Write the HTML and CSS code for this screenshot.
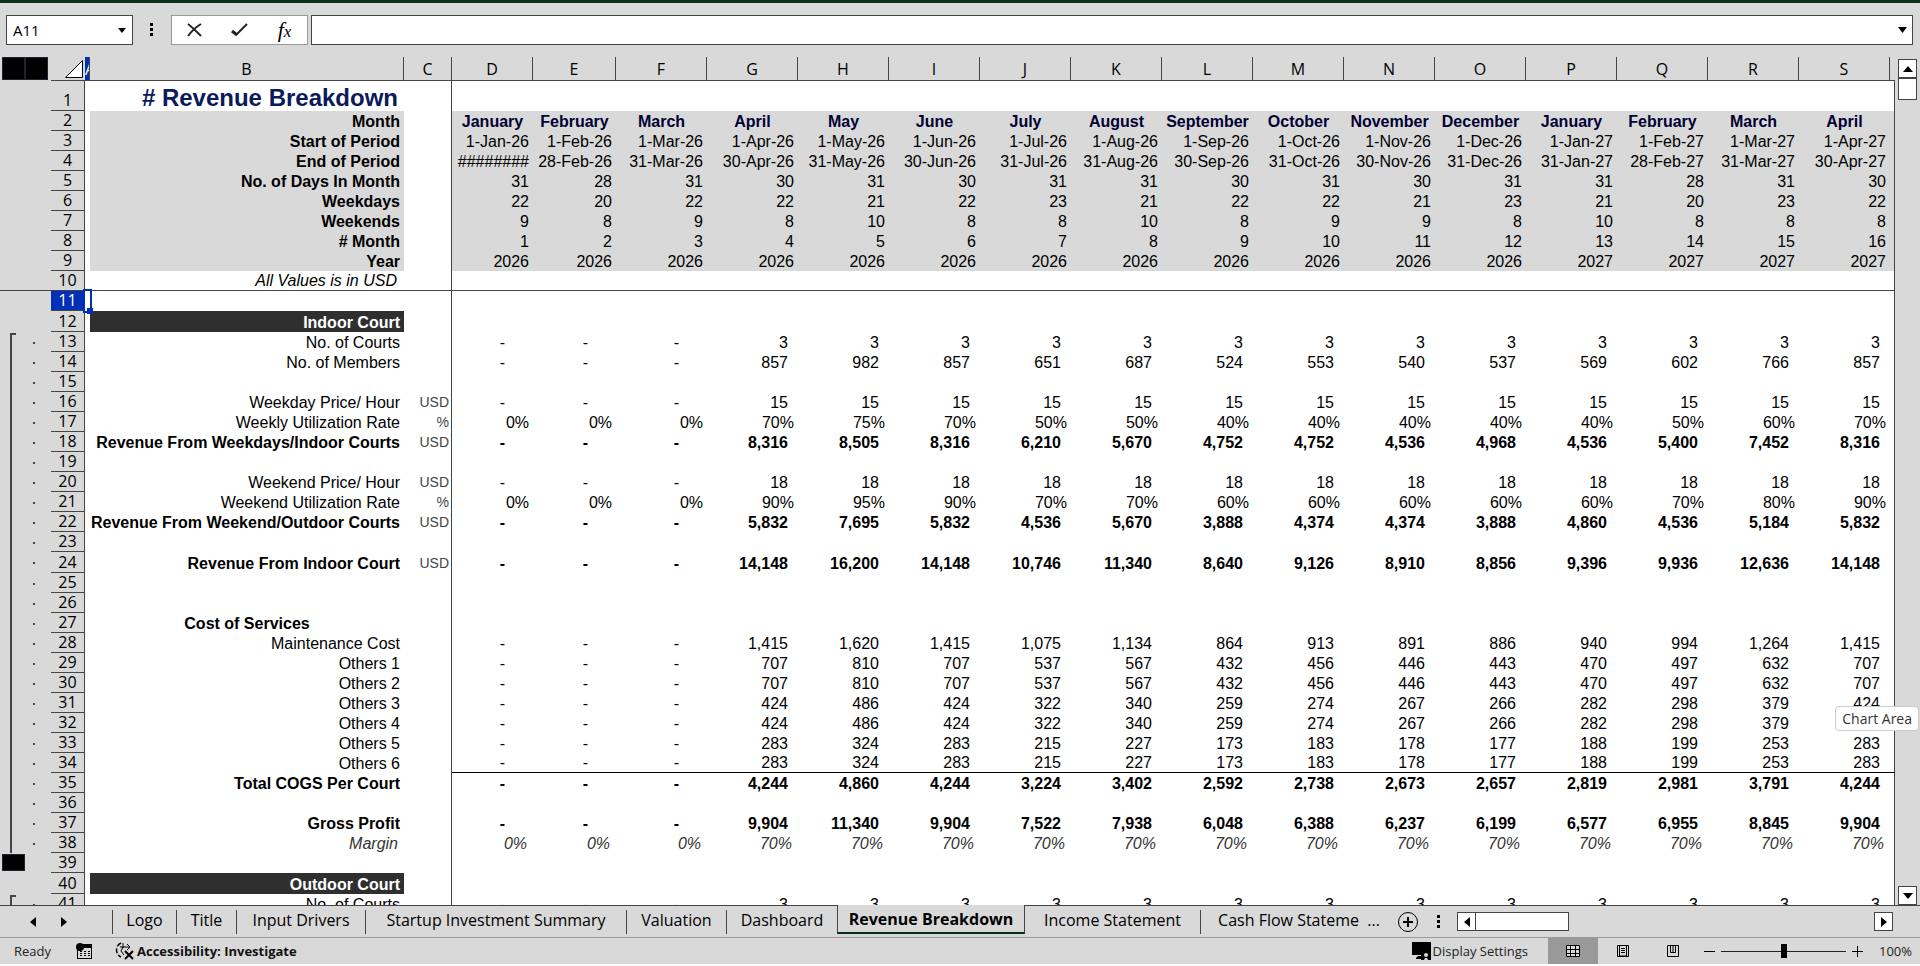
FILE: index.html
```
<!DOCTYPE html>
<html lang="en">
<head>
	<meta charset="UTF-8">
	<meta name="viewport" content="width=device-width">
	<title>Revenue Breakdown</title>
	<link rel="stylesheet" href="styles.css">
</head>
<body>
	<header class="formula-bar">
		<div class="name-box">
			<input class="name-input" type="text" value="A11" aria-label="Name box">
			<button class="plain" aria-label="Open name list"><svg width="8" height="5"><path d="M0 0h8L4 5z"/></svg></button>
		</div>
		<svg class="grip" width="4" height="14"><path d="M0 0h3v3H0zM0 5h3v3H0zM0 10h3v3H0z"/></svg>
		<div class="fx-box">
			<button class="plain" aria-label="Cancel"><svg width="18" height="16" fill="none" stroke="#222" stroke-width="2"><path d="M2 2c4 3 9 8 13 12M15 2C10 5 5 10 2 14"/></svg></button>
			<button class="plain" aria-label="Enter"><svg width="18" height="16" fill="none" stroke="#222"><path stroke-width="3" d="M1 9l5 4"/><path stroke-width="2" d="M5 13L16 2"/></svg></button>
			<button class="plain fx" aria-label="Insert function"><i>f</i><i class="x">x</i></button>
		</div>
		<div class="formula">
			<input class="formula-input" type="text" aria-label="Formula">
			<button class="plain" aria-label="Expand formula bar"><svg width="9" height="6"><path d="M0 0h9L4.500 6z"/></svg></button>
		</div>
	</header>

	<main class="workspace">
		<div class="sheet">
			<table class="grid">
				<colgroup id="cols"></colgroup>
				<thead id="head"></thead>
				<tbody id="body"></tbody>
			</table>
		</div>
		<div class="vscroll">
			<button class="arrow" aria-label="Scroll up"><svg width="10" height="6"><path d="M0 6h10L5 0z"/></svg></button>
			<div class="vthumb"></div>
			<button class="arrow last" aria-label="Scroll down"><svg width="10" height="6"><path d="M0 0h10L5 6z"/></svg></button>
		</div>
		<div class="tip">Chart Area</div>
	</main>

	<nav class="tabs">
		<div class="tab-nav">
			<button class="plain" aria-label="Previous sheet"><svg width="6" height="10"><path d="M6 0v10L0 5z"/></svg></button>
			<button class="plain" aria-label="Next sheet"><svg width="6" height="10"><path d="M0 0v10L6 5z"/></svg></button>
		</div>
		<button class="tab w-logo">Logo</button>
		<button class="tab w-title">Title</button>
		<button class="tab w-input">Input Drivers</button>
		<button class="tab w-startup">Startup Investment Summary</button>
		<button class="tab w-valuation">Valuation</button>
		<button class="tab w-dashboard">Dashboard</button>
		<button class="tab w-revenue active">Revenue Breakdown</button>
		<button class="tab w-income">Income Statement</button>
		<button class="tab w-cash">Cash Flow Stateme&nbsp; ...</button>
		<button class="plain" aria-label="New sheet"><svg width="22" height="22" fill="none" stroke="#000"><circle cx="11" cy="11" r="9.500"/><path stroke-width="2" d="M6 11h10M11 6v10"/></svg></button>
		<svg class="grip" width="4" height="14"><path d="M0 0h3v3H0zM0 5h3v3H0zM0 10h3v3H0z"/></svg>
		<div class="hscroll">
			<button class="arrow" aria-label="Scroll left"><svg width="6" height="10"><path d="M6 0v10L0 5z"/></svg></button>
			<div class="hthumb"></div>
			<button class="arrow last" aria-label="Scroll right"><svg width="6" height="10"><path d="M0 0v10L6 5z"/></svg></button>
		</div>
	</nav>

	<footer class="status">
		<span class="ready">Ready</span>
		<button class="plain macro" aria-label="Record macro"><svg width="16" height="16"><path d="M4 1h12v4H4zM1 7h1v8h13V5h1v11H1z"/><circle cx="4" cy="4" r="4"/><path d="M4 8h2v1H4zM8 8h2v1H8zM12 8h2v1h-2zM4 10h2v1H4zM8 10h2v1H8zM12 10h2v1h-2zM4 12h2v1H4zM8 12h2v1H8zM12 12h2v1h-2z"/></svg></button>
		<button class="plain access"><svg width="20" height="18" fill="none" stroke="#000"><path stroke-width="1.500" stroke-dasharray="5 2" d="M6 1C0 4 0 12 6 15"/><path d="M8 1v5M5 5h10M12 2l3 3-3 3M8 5l-2 4 3 4"/><path d="M10 9l8 8M18 9l-8 8" stroke-width="2"/></svg>Accessibility: Investigate</button>
		<button class="plain display"><svg width="20" height="18"><path d="M0 0h19v9l-8 1v3H0zM4 16l2-2h4v3H4z"/><path d="M9 7h2l1 2h4l1-2h2v11h-3l-1-2h-2l-1 2H9v-4z"/><circle cx="14" cy="13" r="2" fill="#d9d9d9"/></svg>Display Settings</button>
		<button class="view on" aria-label="Normal view"><svg width="14" height="12"><path fill="#d9d9d9" d="M0 0h14v12H0z"/><path fill="none" stroke="#000" d="M.5.5h13v11H.5zM0 4.500h14M0 8.500h14M4.500 0v12M9.500 0v12"/></svg></button>
		<button class="view" aria-label="Page layout"><svg width="12" height="12" fill="none" stroke="#000"><path d="M.5.5h11v11H.5zM2.500 1v10h7V1M4 3.500h4M4 5.500h4M4 7.500h4"/></svg></button>
		<button class="view" aria-label="Page break preview"><svg width="12" height="12" fill="none" stroke="#000"><path d="M.5.5h11v11H.5zM3.500 1v6.500h5V1M6 1v6"/></svg></button>
		<button class="plain zoom-btn" aria-label="Zoom out"><svg width="11" height="11" stroke="#000"><path d="M0 5.500h11"/></svg></button>
		<input class="zoom" type="range" min="0" max="100" value="50" aria-label="Zoom">
		<button class="plain zoom-btn" aria-label="Zoom in"><svg width="11" height="11" stroke="#000"><path d="M0 5.500h11M5.500 0v11"/></svg></button>
		<span class="percent">100%</span>
	</footer>

	<script>
		let months = 'January February March April May June July August September October November December January February March April'.split(' ');
		let days = [31, 28, 31, 30, 31, 30, 31, 31, 30, 31, 30, 31, 31, 28, 31, 30];
		let year = i => i < 12 ? 2026 : 2027;
		let date = (d, i) => d + '-' + months[i].slice(0, 3) + '-' + (year(i) - 2000);

		// the first three months are empty, the club opens in April
		let nums = s => ['-', '-', '-'].concat(s.split(' '));
		let pcts = s => ['0', '0', '0'].concat(s.split(' ')).map(v => v + '%');

		let threes = nums('3 3 3 3 3 3 3 3 3 3 3 3 3');
		let others1 = nums('707 810 707 537 567 432 456 446 443 470 497 632 707');
		let others3 = nums('424 486 424 322 340 259 274 267 266 282 298 379 424');
		let others5 = nums('283 324 283 215 227 173 183 178 177 188 199 253 283');

		// row number: [class, label, unit, values]
		let rows = {
			1: ['title', '# Revenue Breakdown'],
			2: ['info months', 'Month', '', months],
			3: ['info', 'Start of Period', '', months.map((m, i) => date(1, i))],
			4: ['info', 'End of Period', '', months.map((m, i) => i ? date(days[i], i) : '########')],
			5: ['info', 'No. of Days In Month', '', days],
			6: ['info', 'Weekdays', '', [22, 20, 22, 22, 21, 22, 23, 21, 22, 22, 21, 23, 21, 20, 23, 22]],
			7: ['info', 'Weekends', '', [9, 8, 9, 8, 10, 8, 8, 10, 8, 9, 9, 8, 10, 8, 8, 8]],
			8: ['info', '# Month', '', months.map((m, i) => i + 1)],
			9: ['info', 'Year', '', months.map((m, i) => year(i))],
			10: ['note frozen', 'All Values is in USD'],
			11: ['current', ''],
			12: ['section', 'Indoor Court'],
			13: ['num', 'No. of Courts', '', threes],
			14: ['num', 'No. of Members', '', nums('857 982 857 651 687 524 553 540 537 569 602 766 857')],
			16: ['num', 'Weekday Price/ Hour', 'USD', nums('15 15 15 15 15 15 15 15 15 15 15 15 15')],
			17: ['pct', 'Weekly Utilization Rate', '%', pcts('70 75 70 50 50 40 40 40 40 40 50 60 70')],
			18: ['num total', 'Revenue From Weekdays/Indoor Courts', 'USD', nums('8,316 8,505 8,316 6,210 5,670 4,752 4,752 4,536 4,968 4,536 5,400 7,452 8,316')],
			20: ['num', 'Weekend Price/ Hour', 'USD', nums('18 18 18 18 18 18 18 18 18 18 18 18 18')],
			21: ['pct', 'Weekend Utilization Rate', '%', pcts('90 95 90 70 70 60 60 60 60 60 70 80 90')],
			22: ['num total', 'Revenue From Weekend/Outdoor Courts', 'USD', nums('5,832 7,695 5,832 4,536 5,670 3,888 4,374 4,374 3,888 4,860 4,536 5,184 5,832')],
			24: ['num total tall', 'Revenue From Indoor Court', 'USD', nums('14,148 16,200 14,148 10,746 11,340 8,640 9,126 8,910 8,856 9,396 9,936 12,636 14,148')],
			27: ['total center', 'Cost of Services'],
			28: ['num', 'Maintenance Cost', '', nums('1,415 1,620 1,415 1,075 1,134 864 913 891 886 940 994 1,264 1,415')],
			29: ['num', 'Others 1', '', others1],
			30: ['num', 'Others 2', '', others1],
			31: ['num', 'Others 3', '', others3],
			32: ['num', 'Others 4', '', others3],
			33: ['num', 'Others 5', '', others5],
			34: ['num ruled', 'Others 6', '', others5],
			35: ['num total', 'Total COGS Per Court', '', nums('4,244 4,860 4,244 3,224 3,402 2,592 2,738 2,673 2,657 2,819 2,981 3,791 4,244')],
			37: ['num total', 'Gross Profit', '', nums('9,904 11,340 9,904 7,522 7,938 6,048 6,388 6,237 6,199 6,577 6,955 8,845 9,904')],
			38: ['margin', 'Margin', '', pcts('70 70 70 70 70 70 70 70 70 70 70 70 70')],
			40: ['section', 'Outdoor Court'],
			41: ['num', 'No. of Courts', '', threes]
		};

		function outline(r) {
			if (13 == r || 41 == r) return 'group first';
			if (r > 13 && r < 39) return 'group';
			return '';
		}

		let cols = ['outline', 'rownum', 'a', 'b', 'c', 'd', 'e'];
		for (let i = 2; i < 16; i++) cols.push('month');
		cols.push('rest');
		document.getElementById('cols').innerHTML = cols.map(c => '<col class="col-' + c + '">').join('');

		let head = '<tr><th class="levels"><button aria-label="Level 1"></button><button aria-label="Level 2"></button></th>'
			+ '<th class="corner"><svg width="18" height="18"><path d="M17.500.5v17H.5z" fill="#fff" stroke="#000"/></svg></th>';
		'ABCDEFGHIJKLMNOPQRS'.split('').forEach(l => {
			head += '<th class="letter' + ('A' == l ? ' picked' : '') + ('C' == l ? ' split' : '') + '">' + l + '</th>';
		});
		document.getElementById('head').innerHTML = head + '<th class="letter"></th></tr>';

		let body = '';
		for (let r = 1; r <= 41; r++) {
			let [cls, label, unit, values] = rows[r] || ['', ''];
			body += '<tr class="' + cls + '"><td class="outline ' + outline(r) + '">' + (39 == r ? '<button class="fold" aria-label="Collapse group"></button>' : '') + '</td>';
			body += '<th class="rownum">' + r + '</th>';
			// long labels run over the narrow column A
			if (/total/.test(cls) && !/center/.test(cls)) {
				body += '<td class="label" colspan="2"><div class="run">' + label + '</div></td>';
			} else {
				body += '<td class="a"></td><td class="label">' + label + '</td>';
			}
			body += '<td class="unit split">' + (unit || '') + '</td>';
			for (let i = 0; i < 16; i++) {
				let v = values ? values[i] : '';
				body += '<td class="val' + ('-' === v ? ' dash' : '') + '">' + v + '</td>';
			}
			body += '<td class="end"></td></tr>';
		}
		document.getElementById('body').innerHTML = body;
	</script>
</body>
</html>
```
FILE: styles.css
```
* { box-sizing: border-box; }
body { margin: 0; height: 100vh; padding-bottom: 2px; display: flex; flex-direction: column; overflow: hidden; background: #fff; color: #000; font-family: "Segoe UI", "Open Sans", "Noto Sans", sans-serif; font-size: 15px; }
button, input { font: inherit; color: inherit; margin: 0; }
button { padding: 0; }
svg { display: block; flex: none; }
.plain { border: none; background: none; display: flex; align-items: center; justify-content: center; }

.formula-bar { display: flex; flex: none; height: 57px; padding: 12px 7px 12px 6px; border-top: 3px solid #0a3016; background: #d9d9d9; }
.name-box, .fx-box, .formula { display: flex; height: 30px; background: #fff; border: 1px solid #444; }
.name-box { width: 127px; padding-right: 6px; }
.name-input, .formula-input { flex: 1; min-width: 0; border: none; outline: none; background: none; padding: 0 6px; }
.formula-bar .grip { margin: 8px 17px 0; }
.fx-box { width: 137px; border-color: #999; margin-right: 3px; }
.fx-box .plain { flex: 1; }
.fx { font-family: "Liberation Serif", serif; font-size: 22px; line-height: 24px; }
.fx .x { font-size: 17px; padding-top: 4px; }
.formula { flex: 1; padding-right: 5px; }

.workspace { flex: 1; min-height: 0; display: flex; position: relative; background: #d9d9d9; }
.sheet { flex: 1; min-width: 0; overflow: hidden; }
.grid { width: 100%; table-layout: fixed; border-collapse: separate; border-spacing: 0; font-family: Arial, "Liberation Sans", sans-serif; font-size: 16px; }
.col-outline { width: 51px; }
.col-rownum { width: 34px; }
.col-a { width: 5px; }
.col-b { width: 314px; }
.col-c { width: 48px; }
.col-d { width: 81px; }
.col-e { width: 83px; }
.col-month { width: 91px; }
.grid th, .grid td { padding: 0; height: 20px; line-height: 19px; white-space: nowrap; vertical-align: bottom; }
.grid td { background: #fff; text-align: right; }

.grid thead th { height: 24px; border-bottom: 1px solid #444; }
.grid thead .levels { border-bottom: none; text-align: left; vertical-align: top; padding-left: 2px; font-size: 0; line-height: 0; }
.levels button, .fold { width: 23px; height: 23px; background: #000; border: 1px solid #223; vertical-align: top; }
.grid .corner svg { margin: 0 0 2px 14px; }
.grid .letter { border-right: 1px solid #444; font: 16px/22px "Segoe UI", "Open Sans", "Noto Sans", sans-serif; overflow: hidden; }
.grid .letter:last-child { border-right: none; }
.grid .picked { background: #0030b8; color: #fff; }

.grid .rownum { border-right: 1px solid #444; border-bottom: 1px solid #444; font: 16px/19px "Segoe UI", "Open Sans", "Noto Sans", sans-serif; }
.grid .outline { background-color: #d9d9d9; background-repeat: no-repeat; text-align: left; }
.grid .group { background-image: linear-gradient(#444, #444), linear-gradient(#444, #444); background-size: 2px 100%, 2px 2px; background-position: 10px 0, 33px 10px; }
.grid .first { background-image: linear-gradient(#444, #444), linear-gradient(#444, #444), linear-gradient(#444, #444); background-size: 2px 100%, 2px 2px, 6px 2px; background-position: 10px 1px, 33px 10px, 10px 1px; }
.fold { display: block; height: 17px; margin: 0 0 2px 2px; }

.grid .label { padding-right: 4px; }
.run { display: flex; justify-content: flex-end; overflow: hidden; }
.grid .split { border-right: 1px solid #444; }
.grid .unit { padding-right: 2px; font-size: 14px; color: #444; }
.grid .val { padding-right: 4px; }
.grid .end { border-right: 1px solid #444; }

.grid .title td, .grid .title th { height: 30px; }
.grid .title .label { padding-right: 6px; font-size: 24px; line-height: 27px; font-weight: bold; color: #0a1a5c; }
.info .label { font-weight: bold; }
.grid .info .label, .grid .info .val, .grid .info .end { background: #d9d9d9; }
.grid .months .val { text-align: center; padding: 0; font-weight: bold; color: #000033; }
.grid .note .label { font-style: italic; padding-right: 7px; }
.grid .frozen td { border-bottom: 1px solid #444; }
.grid .current .rownum { background: #0030b8; color: #fff; }
.current .a { outline: 2px solid #0030b8; position: relative; }
.current .a::after { content: ""; position: absolute; right: -3px; bottom: -3px; width: 6px; height: 6px; background: #0030b8; }
.grid .section td, .grid .section th { height: 21px; }
.grid .section .label { background: #2f2f2f; color: #fff; font-weight: bold; }
.grid .tall td, .grid .tall th { height: 21px; }
.grid .num .val { padding-right: 10px; }
.grid .num .dash { padding-right: 28px; }
.total .label, .total .val { font-weight: bold; }
.grid .center .label { text-align: center; padding: 0; }
.grid .ruled .val, .grid .ruled .end { border-bottom: 1px solid #000; }
.margin .label, .margin .val { font-style: italic; color: #333; }
.grid .margin .label, .grid .margin .val { padding-right: 6px; }

.vscroll { display: flex; flex-direction: column; width: 25px; padding: 2px 3px 0; }
.arrow { display: flex; align-items: center; justify-content: center; width: 19px; height: 19px; border: 1px solid #444; background: #fff; }
.vthumb { height: 22px; background: #fff; border: 1px solid #444; }
.vscroll .last { margin-top: auto; }
.tip { position: absolute; right: 1px; bottom: 174px; height: 25px; padding: 0 6px; font-size: 14px; line-height: 23px; background: #fff; border: 1px solid #ccc; border-radius: 4px; color: #333; }

.tabs { display: flex; flex: none; align-items: center; height: 33px; background: #d9d9d9; border-top: 1px solid #444; border-bottom: 1px solid #999; font-size: 16px; }
.tab-nav { display: flex; justify-content: space-between; width: 112px; padding: 0 45px 0 30px; }
.tab { flex: none; height: 24px; padding: 0 0 4px; line-height: 20px; border: none; border-right: 1px solid #444; background: none; white-space: nowrap; }
.w-logo { width: 65px; border-left: 1px solid #444; }
.w-title { width: 60px; }
.w-input { width: 129px; }
.w-startup { width: 261px; }
.w-valuation { width: 100px; }
.w-dashboard { width: 110px; border-right: none; }
.w-revenue { width: 188px; }
.w-income { width: 176px; }
.w-cash { width: 196px; border-right: none; }
.active { align-self: flex-start; height: 29px; margin-top: -1px; padding: 0; font-weight: bold; background: #d9d9d9; border-left: 1px solid #444; border-bottom: 2px solid #0a3016; }
.tabs .grip { margin: 0 16px 0 18px; }
.hscroll { display: flex; flex: 1; margin-right: 27px; }
.hthumb { width: 93px; background: #fff; border: 1px solid #444; border-left: none; }
.hscroll .last { margin-left: auto; }

.status { display: flex; flex: none; align-items: center; height: 26px; background: #d9d9d9; font-size: 13px; color: #222; }
.ready { width: 76px; padding-left: 14px; }
.macro { margin-right: 23px; }
.access { gap: 2px; font-weight: bold; color: #111; }
.display { gap: 1px; margin: 0 20px 0 auto; }
.view { display: flex; align-items: center; justify-content: center; width: 50px; height: 26px; border: none; background: none; }
.on { background: #999; }
.zoom-btn { margin: 0 6px; }
.zoom { appearance: none; width: 125px; height: 14px; background: linear-gradient(#222, #222) center / 100% 1px no-repeat; }
.zoom::-webkit-slider-thumb { appearance: none; width: 6px; height: 14px; background: #000; }
.percent { width: 51px; padding-left: 10px; }
```
